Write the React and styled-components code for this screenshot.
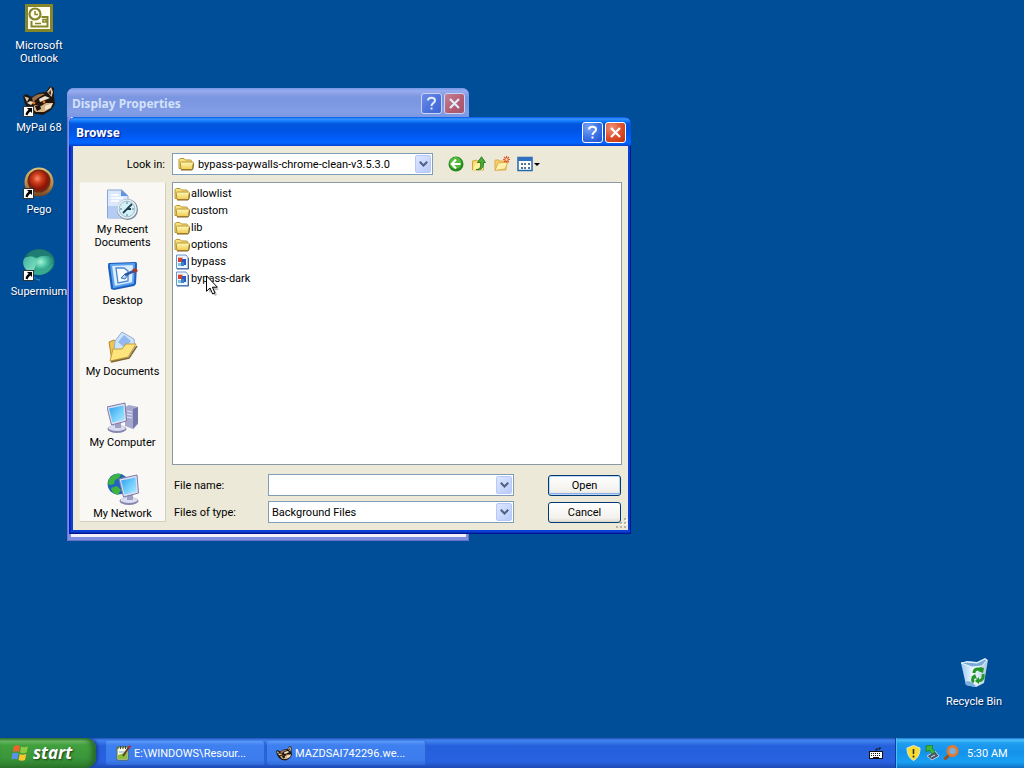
import React from "react";
import styled, { createGlobalStyle, css } from "styled-components";

const GlobalStyle = createGlobalStyle`
  * {
    box-sizing: border-box;
  }
  body {
    margin: 0;
    background: #004e98;
    font-family: Roboto, "Liberation Sans", sans-serif;
    font-size: 11px;
    line-height: 13px;
  }
  button,
  input,
  select {
    font: inherit;
    color: inherit;
    margin: 0;
  }
  svg {
    display: block;
    flex: none;
  }
`;

const Screen = styled.div`
  display: flex;
  flex-direction: column;
  height: 100vh;
  overflow: hidden;
`;

const DesktopArea = styled.main`
  position: relative;
  flex: 1;
  min-height: 0;
`;

const IconColumn = styled.div`
  display: flex;
  flex-direction: column;
  width: 78px;
  padding-top: 3px;
`;

const Shortcut = styled.a`
  display: flex;
  flex-direction: column;
  align-items: center;
  gap: 4px;
  padding: 0 10px;
  height: 82px;
  color: #fff;
  text-align: center;
  text-decoration: none;
  text-shadow: 1px 1px 1px #00285a;
`;

const BinSpot = styled.div`
  position: absolute;
  right: 12px;
  bottom: 0;

  ${Shortcut} {
    gap: 6px;
    height: 81px;
  }
`;

const WindowFrame = styled.section`
  position: absolute;
  display: flex;
  flex-direction: column;
  left: ${(p) => p.$left}px;
  top: ${(p) => p.$top}px;
  width: ${(p) => p.$width}px;
  height: ${(p) => p.$height}px;
  padding: 0 3px 4px 4px;
  border-radius: 7px 7px 0 0;
  ${(p) =>
    p.$active
      ? css`
          background: #0a3fd8;
          box-shadow: inset 1px 0 #0019cf, inset -1px -1px #00138c,
            inset 2px -2px #0a2fb8;
        `
      : css`
          background: #7f8fe0;
          box-shadow: inset 1px 0 #6c74cf, inset -1px -1px #6670c8;
        `}
`;

const TitleBar = styled.header`
  display: flex;
  align-items: center;
  gap: 2px;
  height: 29px;
  flex: none;
  margin: 0 -3px 0 -4px;
  padding: 2px ${(p) => (p.$active ? "5px 0 7px" : "4px 0 5px")};
  border-radius: 7px 7px 0 0;
  color: ${(p) => (p.$active ? "#fff" : "#d3e1fa")};
  text-shadow: ${(p) => (p.$active ? "1px 1px 1px #0a1883" : "none")};
  background: ${(p) =>
    p.$active
      ? "linear-gradient(#0058e6 0, #3a93ff 2px, #127dff 4px, #0355dd 7px, #0054e3 14px, #005dfa 21px, #0066ff 26px, #0041c8 29px)"
      : "linear-gradient(#7697e7 0, #98aef0 3px, #8fa3e9 5px, #7b96e1 9px, #7d98e3 16px, #829ee6 24px, #7b96e1 29px)"};
`;

const Title = styled.h1`
  flex: 1;
  margin: 0;
  padding-top: 1px;
  font: bold 12px/16px "Noto Sans", "Open Sans", sans-serif;
`;

const CaptionButton = styled.button`
  display: flex;
  align-items: center;
  justify-content: center;
  width: 21px;
  height: 21px;
  padding: 0;
  border: 1px solid ${(p) => (p.$active ? "#fff" : "#c9d4f5")};
  border-radius: 3px;
  color: ${(p) => (p.$active ? "#fff" : "#e4ebfb")};
  background: ${(p) => {
    if (p.$kind === "close") {
      return p.$active
        ? "radial-gradient(circle at 30% 25%, #f0937a, #e0502c 50%, #b9300c)"
        : "linear-gradient(135deg, #c68096, #b25c70 60%, #a3566e)";
    }
    return p.$active
      ? "radial-gradient(circle at 30% 25%, #7fa5f6, #3f74e8 50%, #1e4fc8)"
      : "linear-gradient(135deg, #6b8ce8, #4a71dd 60%, #4166cf)";
  }};
`;

const BackWindowBody = styled.div`
  flex: 1;
  background: #f1effa;
`;

const DialogBody = styled.form`
  display: grid;
  flex: 1;
  min-height: 0;
  grid-template-columns: 87px 1fr;
  grid-template-rows: 36px 283px 1fr;
  column-gap: 6px;
  padding: 0 6px 10px;
  background: #ece9d8;
`;

const LookInLabel = styled.label`
  align-self: center;
  padding-right: 1px;
  text-align: right;
`;

const ToolRow = styled.div`
  display: flex;
  align-items: center;
`;

const ComboBox = styled.div`
  position: relative;
  display: flex;
  align-items: center;
  width: ${(p) => p.$width};
  height: 22px;
  border: 1px solid #7f9db9;
  background: #fff;
`;

const comboField = css`
  flex: 1;
  min-width: 0;
  height: 20px;
  border: 0;
  outline: 0;
  background: transparent;
  appearance: none;
`;

const ComboSelect = styled.select`
  ${comboField}
  padding: 0 20px 0 ${(p) => (p.$icon ? 25 : 3)}px;
`;

const ComboInput = styled.input`
  ${comboField}
  padding: 0 3px;
`;

const ComboIcon = styled.span`
  position: absolute;
  left: 5px;
  pointer-events: none;
`;

const dropFace = css`
  display: flex;
  align-items: center;
  justify-content: center;
  width: 16px;
  height: 18px;
  padding: 0;
  border: 1px solid #b7c9f8;
  border-radius: 2px;
  background: linear-gradient(135deg, #dce6ff, #b9cbfa);
`;

const DropFace = styled.span`
  ${dropFace}
  position: absolute;
  right: 1px;
  pointer-events: none;
`;

const DropButton = styled.button`
  ${dropFace}
  margin-right: 1px;
`;

const ToolButtons = styled.div`
  display: flex;
  align-items: center;
  gap: 7px;
  margin-left: 15px;
`;

const ToolButton = styled.button`
  display: flex;
  align-items: center;
  gap: 1px;
  padding: 0;
  border: 0;
  background: none;
`;

const PlacesBar = styled.nav`
  grid-row: 2 / 4;
  display: flex;
  flex-direction: column;
  margin-bottom: 1px;
  padding-top: 6px;
  overflow: hidden;
  border: 1px solid;
  border-color: #f6f3e8 #d2cfbf #d2cfbf #f3ecdd;
  background: #f9f8f4;
`;

const Place = styled.a`
  display: flex;
  flex: none;
  flex-direction: column;
  align-items: center;
  gap: 2px;
  height: 71px;
  color: #000;
  text-align: center;
  text-decoration: none;
`;

const FileList = styled.ul`
  margin: 0;
  padding: 2px 1px;
  list-style: none;
  border: 1px solid #8b98a6;
  background: #fff;
`;

const FileRow = styled.li`
  display: flex;
  align-items: center;
  gap: 1px;
  height: 17px;
`;

const Fields = styled.div`
  display: grid;
  grid-template-columns: 94px 246px 1fr;
  grid-auto-rows: 22px;
  row-gap: 5px;
  align-items: center;
  padding: 9px 1px 0 2px;
`;

const PushButton = styled.button`
  justify-self: end;
  width: 73px;
  height: 21px;
  padding: 0;
  border: 1px solid #003c74;
  border-radius: 3px;
  background: linear-gradient(#fff, #f2f1ec 80%, #dbd7cb);
  box-shadow: ${(p) =>
    p.$primary ? "inset 0 0 0 1px #bcd4f6, inset 0 -2px #8fb0ea" : "none"};
`;

const Grip = styled.svg`
  position: absolute;
  right: 4px;
  bottom: 5px;
`;

const Pointer = styled.svg`
  position: absolute;
  left: 206px;
  top: 275px;
`;

const Taskbar = styled.footer`
  display: flex;
  height: 30px;
  flex: none;
  color: #fff;
  background: linear-gradient(#1f4fb4 0, #3f82ee 2px, #3a7bea 4px, #2560dc 8px, #2862e0 24px, #1c49b4 30px);
`;

const StartButton = styled.button`
  display: flex;
  align-items: center;
  gap: 4px;
  width: 96px;
  padding: 0 0 0 11px;
  border: 0;
  border-radius: 0 10px 10px 0;
  color: #fff;
  font: italic bold 17px/24px "Open Sans", "Noto Sans", sans-serif;
  text-shadow: 1px 1px 2px #1c3c12;
  background: linear-gradient(#2f7a2f 0, #6dbb66 3px, #41a03e 7px, #3a963a 20px, #2d7a2c 30px);
  box-shadow: inset -4px 0 5px #27682a, 2px 0 3px #1c3f9c;
`;

const Tasks = styled.div`
  display: flex;
  flex: 1;
  gap: 2px;
  padding: 3px 0 3px 10px;
`;

const TaskButton = styled.button`
  display: flex;
  align-items: center;
  gap: 3px;
  width: 159px;
  padding: 0 9px;
  border: 0;
  border-radius: 2px;
  text-align: left;
  background: linear-gradient(#5f9bf8, #3f80f0 4px, #3c7cec 19px, #316bd8);
  box-shadow: inset -1px 0 #2c63cf;
`;

const TaskText = styled.span`
  overflow: hidden;
  white-space: nowrap;
`;

const LanguageBar = styled.div`
  display: flex;
  align-items: center;
  padding-right: 12px;
`;

const Tray = styled.div`
  display: flex;
  align-items: center;
  gap: 3px;
  width: 129px;
  padding-left: 10px;
  border-left: 1px solid #0f3f9e;
  background: linear-gradient(#1576cf 0, #4fc0fa 2px, #1f9df0 5px, #1592ea 14px, #18a0f2 24px, #0f6fc4 30px);
  box-shadow: inset 1px 0 #52c0f8;
`;

const Clock = styled.time`
  margin-left: 5px;
`;

const ShortcutArrow = () => (
  <g>
    <rect x=".5" y="21.500" width="10" height="10" fill="#fff" stroke="#333" />
    <path d="M4 23h5v5l-1.600-1.600C5.500 27.500 5 29 4.500 30.500L2.500 29.500C3 27.500 4 26 5.600 24.800z" fill="#000" />
  </g>
);

const OutlookIcon = () => (
  <svg width="32" height="32" viewBox="0 0 32 32">
    <rect x="2" y="1" width="28" height="28" fill="#85862a" />
    <rect x="5" y="4" width="22" height="22" fill="#fffef0" />
    <circle cx="12" cy="11" r="5.500" fill="#fffef0" stroke="#85862a" strokeWidth="2.200" />
    <path d="M12 8v3.500h3" fill="none" stroke="#85862a" strokeWidth="1.500" />
    <path d="M8.500 18v5.500h16V14h-6" fill="none" stroke="#85862a" strokeWidth="2" />
    <path d="M12 20.500h6M20 16.500h3v2.500h-3z" fill="none" stroke="#85862a" strokeWidth="1.600" />
  </svg>
);

const Raccoon = () => (
  <g>
    <path d="M0 11l3-2 6 3 6-4 8-1 4-6 4 2v9l1 7-4 6-8 5-8-1-6-4-4-6z" fill="#20160f" />
    <path d="M1.500 11.500L6 13l-2 4zM24 7l4-5 2 5-1.500 5z" fill="#dcc8a8" />
    <path d="M25 8l3-3v5z" fill="#4a3424" />
    <path d="M9 13c4-4 9-5 13-4l-7 4-5 4z" fill="#96714c" />
    <path d="M4 18l3-2 4 1-3 3z" fill="#e6d6bc" />
    <path d="M16 14l6-3 5 2-5 2-5 2z" fill="#efe4cf" />
    <path d="M8 22l5-2 5 1 5-3 7 0-2 5-7 4-8 0z" fill="#d8b486" />
    <path d="M22 21l8-3-3 5-5 2z" fill="#f2e6cc" />
    <path d="M12 21l5-1 1 4-4 2z" fill="#17100c" />
    <circle cx="11" cy="18" r="1.400" fill="#e0701c" />
    <circle cx="21" cy="17" r="1.400" fill="#e0701c" />
  </g>
);

const MyPalIcon = () => (
  <svg width="32" height="32" viewBox="0 0 32 32">
    <Raccoon />
    <ShortcutArrow />
  </svg>
);

const PegoIcon = () => (
  <svg width="32" height="32" viewBox="0 0 32 32">
    <defs>
      <radialGradient id="pegoBall" cx=".42" cy=".4">
        <stop offset="0" stopColor="#f79070" />
        <stop offset=".45" stopColor="#d23e1c" />
        <stop offset="1" stopColor="#8a1606" />
      </radialGradient>
      <linearGradient id="pegoRim" x1="0" y1="0" x2="0" y2="1">
        <stop offset="0" stopColor="#dcc57b" />
        <stop offset=".6" stopColor="#b98442" />
        <stop offset="1" stopColor="#6d4220" />
      </linearGradient>
    </defs>
    <circle cx="16" cy="15" r="14.500" fill="url(#pegoRim)" />
    <circle cx="16" cy="14" r="11.500" fill="#6e2a16" />
    <circle cx="16" cy="13.500" r="10" fill="url(#pegoBall)" />
    <ShortcutArrow />
  </svg>
);

const SupermiumIcon = () => (
  <svg width="32" height="32" viewBox="0 0 32 32">
    <defs>
      <radialGradient id="teal" cx=".55" cy=".5">
        <stop offset="0" stopColor="#a5f4d8" />
        <stop offset=".45" stopColor="#45bd9d" />
        <stop offset="1" stopColor="#14695f" />
      </radialGradient>
      <linearGradient id="tealLobe" x1="0" y1="0" x2="1" y2="1">
        <stop offset="0" stopColor="#3fb09c" />
        <stop offset="1" stopColor="#8ae8c8" />
      </linearGradient>
    </defs>
    <ellipse cx="16" cy="13" rx="15.500" ry="13" fill="url(#teal)" />
    <path d="M3 7c6-9 21-9 27 2-5-3-11-3-16 0-4-2-8-3-11-2z" fill="#1f7c74" />
    <path d="M.8 10c4-4 12-3 12 3s-3 11-5 11C1 21-1 15 .8 10z" fill="url(#tealLobe)" />
    <path d="M13 20c7 2 13-1 17-6-1 7-7 12-14 12-4 0-7-1-8-2 3-1 4-2 5-4z" fill="#37ab90" />
    <path d="M11 28c2 2 3 3 6 3" fill="none" stroke="#2d9fb4" />
    <ShortcutArrow />
  </svg>
);

const RecycleBinIcon = () => (
  <svg width="32" height="32" viewBox="0 0 32 32">
    <defs>
      <linearGradient id="binSide">
        <stop offset="0" stopColor="#9ccaf0" />
        <stop offset=".45" stopColor="#f0f9ff" />
        <stop offset="1" stopColor="#a9c8dc" />
      </linearGradient>
    </defs>
    <path d="M3 6l6-2 10 1 8-4 3 2-4 23-8 4-10-2z" fill="url(#binSide)" />
    <path d="M3 6l6-1 10 1 8-4 2 1-5 6-10 1z" fill="#78aada" stroke="#e8f6ff" />
    <path d="M7 25c4-2 7 0 11 4l-1 1-9-2z" fill="#7faee0" />
    <g fill="none" stroke="#249527" strokeWidth="3">
      <path d="M16 16c0-4 4-5 7-3M25 17c1 4-1 7-5 7M16 25c-2-1-2-3 0-5" />
    </g>
    <path d="M22 10l4 1-1 5-5-2zM21 20v7l-4-3zM13 20l4-3 2 5z" fill="#249527" />
  </svg>
);

const FolderIcon = () => (
  <svg width="16" height="16" viewBox="0 0 16 16">
    <defs>
      <linearGradient id="folderFace" x1="0" y1="0" x2="0" y2="1">
        <stop offset="0" stopColor="#fffab8" />
        <stop offset="1" stopColor="#efca52" />
      </linearGradient>
    </defs>
    <path d="M1 12.500V4c0-1 1-1.500 1.500-1.500H6L7.500 4h5c1 0 1 1 1 1.500v7z" fill="#f7e17c" stroke="#b89432" />
    <path d="M3 13.500L2.200 7c0-1 .5-1 1-1h11c1 0 1.300.5 1.200 1.200l-.8 5.300c0 .7-.5 1-1 1z" fill="url(#folderFace)" stroke="#b89432" />
    <path d="M3 14h11l1-1.500.5-5" fill="none" stroke="#806424" />
  </svg>
);

const PictureFileIcon = () => (
  <svg width="16" height="16" viewBox="0 0 16 16">
    <path d="M2.500 1h9.500l2 2.500v11H2.500z" fill="#edf5ff" stroke="#6a94cc" />
    <path d="M4 3h5v5H4z" fill="#f2b8a4" />
    <path d="M4 4h4v4H4z" fill="#cf4330" />
    <path d="M8 5h4v6H8z" fill="#2b58bc" />
    <path d="M4 9h4v3H4z" fill="#7fc6d8" />
    <path d="M7 8h3v4H7z" fill="#3f7fce" />
    <path d="M3 15h11.500V4" fill="none" stroke="#3d659c" />
  </svg>
);

const RecentIcon = () => (
  <svg width="32" height="32" viewBox="0 0 32 32">
    <path d="M.5 1H15l6 6v22H.5z" fill="#dce8fb" stroke="#8aa4d4" />
    <path d="M14 1v6h7z" fill="#5f92e0" />
    <path d="M4 6h8M4 9h12M4 12h8" stroke="#fff" strokeWidth="1.500" />
    <path d="M1 17h11v12H1z" fill="#b4cbf3" />
    <circle cx="20.500" cy="20.500" r="10.500" fill="#76899a" />
    <circle cx="20" cy="20" r="9" fill="#d6f0f7" stroke="#e8eef2" strokeWidth="1.600" />
    <circle cx="20" cy="20" r="7.800" fill="none" stroke="#8fb5c8" strokeWidth=".8" />
    <path d="M20 20l5-5M20 20h4M16 24l4-4" stroke="#214052" strokeWidth="1.800" />
    <path d="M20 13v2M20 25v2M13 20h2M25 20h2" stroke="#4d7f98" />
  </svg>
);

const DesktopIcon = () => (
  <svg width="32" height="32" viewBox="0 0 32 32">
    <path d="M2 3l26-1c2 0 2 1 2 3l-1 19-2 2-20 4-3-1-3-22c0-2 0-4 1-4z" fill="#1e5fbd" />
    <path d="M4 5l23-1-1 19-19 4z" fill="#dceefe" stroke="#5ba2ee" strokeWidth="2" />
    <path d="M9 8h8l4 3v10l-10 2z" fill="#f8fcff" stroke="#4a85d0" strokeWidth="1.300" />
    <path d="M14 18l4-4 3 1-3 4z" fill="#b8d4f5" stroke="#346fb9" />
    <path d="M18 15l9-4" stroke="#2c59a0" strokeWidth="2.600" />
    <path d="M26 11.500l4-2" stroke="#9c3a34" strokeWidth="4" />
  </svg>
);

const DocumentsIcon = () => (
  <svg width="32" height="32" viewBox="0 0 32 32">
    <path d="M2 11l5-2 3 2h12l-3 15-14 4z" fill="#eec550" stroke="#b08a35" />
    <path d="M8 10L15 1l12 7 1 10-10 9-11-7z" fill="#cfe3fa" stroke="#90aed0" />
    <path d="M11 11l6-7 7 6-6 7z" fill="#92b9ee" />
    <path d="M3 30l3-12 9 0 4-5 10 0-8 13z" fill="#fde47c" stroke="#c49d3b" />
    <path d="M4 31l18-4 8-12" fill="none" stroke="#7f6732" strokeWidth="1.500" />
  </svg>
);

const Monitor = () => (
  <g>
    <ellipse cx="10" cy="27" rx="9.500" ry="4" fill="#8687ae" />
    <ellipse cx="10" cy="26" rx="8.500" ry="3" fill="#dcdcf0" />
    <path d="M8 20h6v6H8z" fill="#9fa0c6" />
    <path d="M0 5l18-4 1.500 18-15 4z" fill="#dde0f2" stroke="#7a7aa6" />
    <path d="M2 6.500L16.500 3.500l1 14L5.500 20.500z" fill="url(#crt)" />
  </g>
);

const CrtGradient = () => (
  <defs>
    <linearGradient id="crt" x1="0" y1="0" x2="1" y2="1">
      <stop offset="0" stopColor="#2f9be8" />
      <stop offset=".5" stopColor="#6ccbfb" />
      <stop offset="1" stopColor="#b3ebff" />
    </linearGradient>
  </defs>
);

const ComputerIcon = () => (
  <svg width="32" height="32" viewBox="0 0 32 32">
    <CrtGradient />
    <path d="M18 5l4-2 9 2v17l-5 5-8-3z" fill="#a6a8d0" />
    <path d="M26 7l5-2v16l-5 6z" fill="#7577aa" />
    <path d="M20 9l5 1M20 12l5 1M20 15l5 1" stroke="#e6e6f6" />
    <Monitor />
  </svg>
);

const NetworkIcon = () => (
  <svg width="32" height="32" viewBox="0 0 32 32">
    <CrtGradient />
    <circle cx="11" cy="11" r="10.500" fill="#2263c0" />
    <path d="M2 6C6 1 10 0 14 1l-2 4-4 2-1 4-4 1-2-1zM4 15l6-2 4 4-3 5c-4-1-6-3-7-7zM15 4l5 2v4h-4z" fill="#3fb43c" />
    <g transform="translate(12 1)">
      <Monitor />
    </g>
  </svg>
);

const ChevronIcon = () => (
  <svg width="9" height="6" viewBox="0 0 9 6">
    <path d="M.8.8l3.700 3.700L8.200.8" fill="none" stroke="#4d6185" strokeWidth="2" />
  </svg>
);

const BackIcon = () => (
  <svg width="16" height="16" viewBox="0 0 16 16">
    <circle cx="8" cy="8" r="7.500" fill="#258a1c" />
    <circle cx="7.500" cy="7" r="6" fill="#53ba3e" />
    <path d="M8 3.500L3.800 8 8 12.500M4 8h8.500" fill="none" stroke="#fff" strokeWidth="2.200" />
  </svg>
);

const UpIcon = () => (
  <svg width="16" height="16" viewBox="0 0 16 16">
    <path d="M1.500 14V5l4-1 1 1 6-1v10z" fill="#f6d86c" stroke="#d1a740" />
    <path d="M2 14.500l2-7 9-1-1 7z" fill="#fff0a0" />
    <path d="M5 13.500c4 0 5-2 4.500-7H6.500L10.500.8l4 5.700h-2c.5 5-2 8-7.500 7z" fill="#4aad36" stroke="#1e6b1c" strokeWidth=".8" />
  </svg>
);

const NewFolderIcon = () => (
  <svg width="16" height="16" viewBox="0 0 16 16">
    <path d="M1 14V4h4l1 1h6v9z" fill="#f4cf6a" stroke="#dfae50" />
    <path d="M1 14.500L4 7l10-1-3 7z" fill="#fff1a8" stroke="#dfae50" />
    <path d="M12.500 0v7M9 3.500h7M10 1l5 5M15 1l-5 5" stroke="#e2592c" strokeWidth="1.200" />
    <circle cx="12.500" cy="3.500" r="1.200" fill="#ffd9b0" />
  </svg>
);

const ViewIcon = () => (
  <svg width="23" height="16" viewBox="0 0 23 16">
    <rect x="1" y="1.500" width="14" height="13" fill="#fff" stroke="#246aae" strokeWidth="1.500" />
    <path d="M1 1h14v4H1z" fill="#2f70c0" />
    <path d="M4 7h2v2H4zM7 7h2v2H7zM11 7h2v2h-2zM4 11h2v2H4zM7 11h2v2H7zM11 11h2v2h-2z" fill="#56758f" />
    <path d="M17 7h6L20 10z" fill="#000" />
  </svg>
);

const WindowsFlag = () => (
  <svg width="18" height="18" viewBox="0 0 18 18">
    <path d="M3 2c2-1 4-1 6 0L8 8C6 7 4 7 2 8z" fill="#f0622c" />
    <path d="M10 2.500c2 1 4 1 7 0l-1.500 6c-2 1-4 1-6.500 0z" fill="#8ccb3d" />
    <path d="M1.500 9.500c2-1 4-1 6 0l-1 6c-2-1-4-1-6 0z" fill="#5b91f0" />
    <path d="M8.800 10c2 1 4 1 6.500 0l-1.300 6c-2 1-4 1-6.500 0z" fill="#fcc62e" />
  </svg>
);

const NotepadIcon = () => (
  <svg width="16" height="16" viewBox="0 0 16 16">
    <path d="M2 2h11v13H2z" fill="#f8fbe9" stroke="#5a6d38" />
    <path d="M3 10l9-3v7H3z" fill="#8abf3e" />
    <path d="M3 2v2M5.500 1v3M8 1v3M10.500 1v3" stroke="#3c4a28" />
    <path d="M4 7h6" stroke="#8aa5c6" />
    <path d="M8 11l6-9" stroke="#5d3b1e" strokeWidth="1.800" />
    <path d="M13.500 3L15.500.8" stroke="#c02a20" strokeWidth="2" />
  </svg>
);

const KeyboardIcon = () => (
  <svg width="14" height="12" viewBox="0 0 14 12">
    <path d="M7 4V2h4V0" fill="none" stroke="#101010" />
    <rect x=".5" y="4.500" width="13" height="7" fill="#fff" stroke="#101010" />
    <path d="M2 6.500h10M2 8.500h10" stroke="#101010" strokeDasharray="1 1" />
    <path d="M4 10.500h6" stroke="#101010" />
  </svg>
);

const ShieldIcon = () => (
  <svg width="15" height="16" viewBox="0 0 15 16">
    <path d="M7.500.5L14 3c0 6-2 10-6.500 12.500C3 13 1 9 1 3z" fill="#f8dc2f" stroke="#e4e6cc" />
    <path d="M7.500 4v5M7.500 10.500v2" stroke="#30301c" strokeWidth="1.600" />
  </svg>
);

const DeviceIcon = () => (
  <svg width="16" height="16" viewBox="0 0 16 16">
    <path d="M3 11l8-5 4 5-7 4z" fill="#45566a" stroke="#c4d1de" />
    <path d="M2 1l7-1-1 3 3 4-3 2-3-4-3 2z" fill="#3eb53b" stroke="#1f7a25" strokeWidth=".8" />
    <path d="M7 12l4-2" stroke="#dfe8f0" />
  </svg>
);

const MagnifierIcon = () => (
  <svg width="16" height="16" viewBox="0 0 16 16">
    <path d="M6 10l-4.500 4.500" stroke="#a14d14" strokeWidth="3" />
    <circle cx="9.500" cy="6" r="4.600" fill="#78afd8" stroke="#e8792b" strokeWidth="2.800" />
  </svg>
);

const HelpGlyph = () => (
  <svg width="13" height="15" viewBox="0 0 13 15">
    <path d="M3 4.500C3 .8 10 .8 10 4.500 10 7 6.500 7 6.500 10" fill="none" stroke="currentColor" strokeWidth="2" />
    <path d="M5.500 11.500h2v2h-2z" fill="currentColor" />
  </svg>
);

const CloseGlyph = () => (
  <svg width="13" height="13" viewBox="0 0 13 13">
    <path d="M2 2l9 9M11 2l-9 9" stroke="currentColor" strokeWidth="2.200" />
  </svg>
);

const shortcuts = [
  { name: "Microsoft Outlook", Icon: OutlookIcon },
  { name: "MyPal 68", Icon: MyPalIcon },
  { name: "Pego", Icon: PegoIcon },
  { name: "Supermium", Icon: SupermiumIcon },
];

const places = [
  { name: "My Recent Documents", Icon: RecentIcon },
  { name: "Desktop", Icon: DesktopIcon },
  { name: "My Documents", Icon: DocumentsIcon },
  { name: "My Computer", Icon: ComputerIcon },
  { name: "My Network", Icon: NetworkIcon },
];

const files = [
  { name: "allowlist", Icon: FolderIcon },
  { name: "custom", Icon: FolderIcon },
  { name: "lib", Icon: FolderIcon },
  { name: "options", Icon: FolderIcon },
  { name: "bypass", Icon: PictureFileIcon },
  { name: "bypass-dark", Icon: PictureFileIcon },
];

const WindowTitle = ({ title, active }) => (
  <TitleBar $active={active}>
    <Title>{title}</Title>
    <CaptionButton type="button" $kind="help" $active={active} aria-label="Help">
      <HelpGlyph />
    </CaptionButton>
    <CaptionButton type="button" $kind="close" $active={active} aria-label="Close">
      <CloseGlyph />
    </CaptionButton>
  </TitleBar>
);

const BrowseDialog = () => (
  <WindowFrame $left={69} $top={117} $width={562} $height={417} $active>
    <WindowTitle title="Browse" active />
    <DialogBody onSubmit={(e) => e.preventDefault()}>
      <LookInLabel htmlFor="look-in">Look in:</LookInLabel>
      <ToolRow>
        <ComboBox $width="261px">
          <ComboIcon>
            <FolderIcon />
          </ComboIcon>
          <ComboSelect id="look-in" $icon>
            <option>bypass-paywalls-chrome-clean-v3.5.3.0</option>
          </ComboSelect>
          <DropFace>
            <ChevronIcon />
          </DropFace>
        </ComboBox>
        <ToolButtons>
          <ToolButton type="button" aria-label="Back">
            <BackIcon />
          </ToolButton>
          <ToolButton type="button" aria-label="Up one level">
            <UpIcon />
          </ToolButton>
          <ToolButton type="button" aria-label="Create new folder">
            <NewFolderIcon />
          </ToolButton>
          <ToolButton type="button" aria-label="View menu">
            <ViewIcon />
          </ToolButton>
        </ToolButtons>
      </ToolRow>
      <PlacesBar>
        {places.map(({ name, Icon }) => (
          <Place href="#" key={name}>
            <Icon />
            {name}
          </Place>
        ))}
      </PlacesBar>
      <FileList>
        {files.map(({ name, Icon }) => (
          <FileRow key={name}>
            <Icon />
            {name}
          </FileRow>
        ))}
      </FileList>
      <Fields>
        <label htmlFor="file-name">File name:</label>
        <ComboBox $width="100%">
          <ComboInput id="file-name" type="text" />
          <DropButton type="button" aria-label="Recent file names">
            <ChevronIcon />
          </DropButton>
        </ComboBox>
        <PushButton type="submit" $primary>
          Open
        </PushButton>
        <label htmlFor="file-type">Files of type:</label>
        <ComboBox $width="100%">
          <ComboSelect id="file-type">
            <option>Background Files</option>
          </ComboSelect>
          <DropFace>
            <ChevronIcon />
          </DropFace>
        </ComboBox>
        <PushButton type="button">Cancel</PushButton>
      </Fields>
    </DialogBody>
    <Grip width="11" height="11" viewBox="0 0 11 11">
      <path d="M8 0h2v2H8zM4 4h2v2H4zM8 4h2v2H8zM0 8h2v2H0zM4 8h2v2H4zM8 8h2v2H8z" fill="#b8b4a2" />
      <path d="M10 1h1v2H9V2h1zM6 5h1v2H5V6h1zM10 5h1v2H9V6h1z" fill="#fff" />
    </Grip>
  </WindowFrame>
);

const App = () => {
  return (
    <Screen>
      <GlobalStyle />
      <DesktopArea>
        <IconColumn>
          {shortcuts.map(({ name, Icon }) => (
            <Shortcut href="#" key={name}>
              <Icon />
              {name}
            </Shortcut>
          ))}
        </IconColumn>
        <BinSpot>
          <Shortcut href="#">
            <RecycleBinIcon />
            Recycle Bin
          </Shortcut>
        </BinSpot>
        <WindowFrame $left={67} $top={88} $width={402} $height={453}>
          <WindowTitle title="Display Properties" />
          <BackWindowBody />
        </WindowFrame>
        <BrowseDialog />
        <Pointer width="14" height="22" viewBox="0 0 14 22">
          <path d="M3 3v15l3-2 3 5 2-1-2-5h4z" fill="#000" opacity=".25" />
          <path d="M.5.8v15.500l3.500-3.300 2.700 6 2.300-1-2.600-5.800h5z" fill="#fff" stroke="#000" />
        </Pointer>
      </DesktopArea>
      <Taskbar>
        <StartButton>
          <WindowsFlag />
          start
        </StartButton>
        <Tasks>
          <TaskButton>
            <NotepadIcon />
            <TaskText>E:\WINDOWS\Resour...</TaskText>
          </TaskButton>
          <TaskButton>
            <svg width="16" height="16" viewBox="0 0 32 30">
              <Raccoon />
            </svg>
            <TaskText>MAZDSAI742296.we...</TaskText>
          </TaskButton>
        </Tasks>
        <LanguageBar>
          <KeyboardIcon />
        </LanguageBar>
        <Tray>
          <ShieldIcon />
          <DeviceIcon />
          <MagnifierIcon />
          <Clock>5:30 AM</Clock>
        </Tray>
      </Taskbar>
    </Screen>
  );
};

export default App;
